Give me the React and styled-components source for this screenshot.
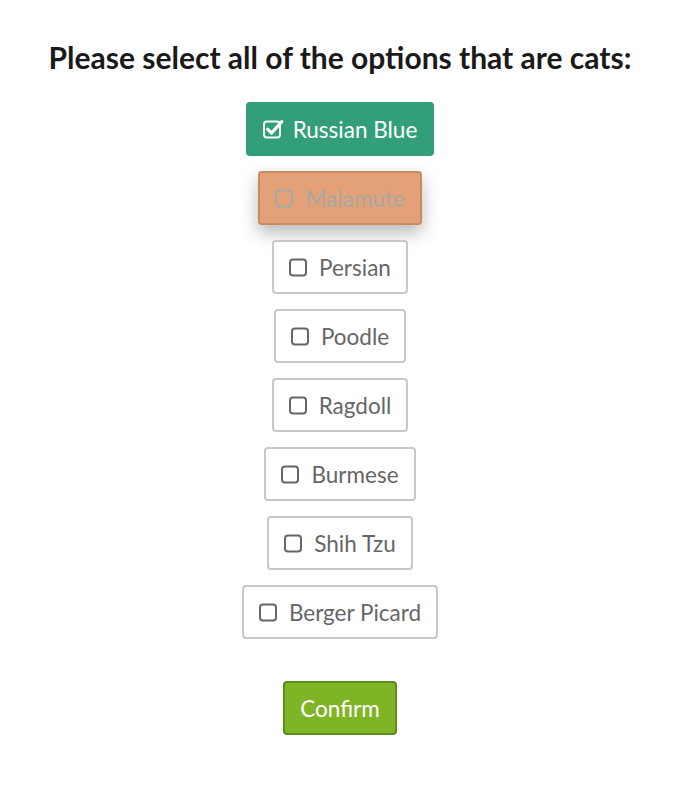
import styled, { createGlobalStyle } from "styled-components"

const GlobalStyle = createGlobalStyle`
  body {
    margin: 0;
    background: #fff;
    font-family: Lato, "Open Sans", sans-serif;
  }
`

const Page = styled.div`
  display: flex;
  flex-direction: column;
  align-items: center;
  padding: 36px 0 0 4px;
`

const Title = styled.h1`
  margin: 0 0 24px;
  font-size: 30px;
  font-weight: 700;
  color: #1a1a1a;
  line-height: 42px;
`

const Options = styled.div`
  display: flex;
  flex-direction: column;
  align-items: center;
  gap: 15px;
`

const palette = {
  idle: { bg: "#fff", border: "#c8c8c8", color: "#666" },
  checked: { bg: "#329f7a", border: "#329f7a", color: "#fff" },
  dragging: { bg: "#e4a177", border: "#c98b62", color: "#a9a8a2" },
}

const Option = styled.button`
  display: flex;
  align-items: center;
  gap: 12px;
  height: 54px;
  padding: 0 15px;
  border: 2px solid ${(p) => palette[p.$state].border};
  border-radius: 4px;
  background: ${(p) => palette[p.$state].bg};
  color: ${(p) => palette[p.$state].color};
  font-family: Lato, sans-serif;
  font-size: 22.5px;
  box-shadow: ${(p) => (p.$state === "dragging" ? "0 8px 18px rgba(0,0,0,0.28)" : "none")};
  cursor: pointer;
`

const ConfirmButton = styled.button`
  margin-top: 42px;
  height: 54px;
  padding: 0 15px;
  border: 2px solid #5e8d1b;
  border-radius: 4px;
  background: #7fb425;
  color: #fff;
  font-family: Lato, sans-serif;
  font-size: 22.5px;
  cursor: pointer;
`

const Box = ({ checked }) => (
  <svg width="18" height="20" viewBox="0 0 18 20" fill="none" stroke="currentColor" style={{ overflow: "visible" }}>
    <rect x="1" y="2.5" width="16" height="16" rx="3" strokeWidth="2" />
    {checked && (
      <path d="M4.6 10.2 L8.6 14 L18.8 2.6" strokeWidth="3.2" strokeLinecap="round" strokeLinejoin="round" />
    )}
  </svg>
)

const options = [
  { label: "Russian Blue", state: "checked" },
  { label: "Malamute", state: "dragging" },
  { label: "Persian", state: "idle" },
  { label: "Poodle", state: "idle" },
  { label: "Ragdoll", state: "idle" },
  { label: "Burmese", state: "idle" },
  { label: "Shih Tzu", state: "idle" },
  { label: "Berger Picard", state: "idle" },
]

export default function App() {
  return (
    <Page>
      <GlobalStyle />
      <Title>Please select all of the options that are cats:</Title>
      <Options>
        {options.map((o) => (
          <Option key={o.label} $state={o.state}>
            <Box checked={o.state === "checked"} />
            {o.label}
          </Option>
        ))}
      </Options>
      <ConfirmButton>Confirm</ConfirmButton>
    </Page>
  )
}
